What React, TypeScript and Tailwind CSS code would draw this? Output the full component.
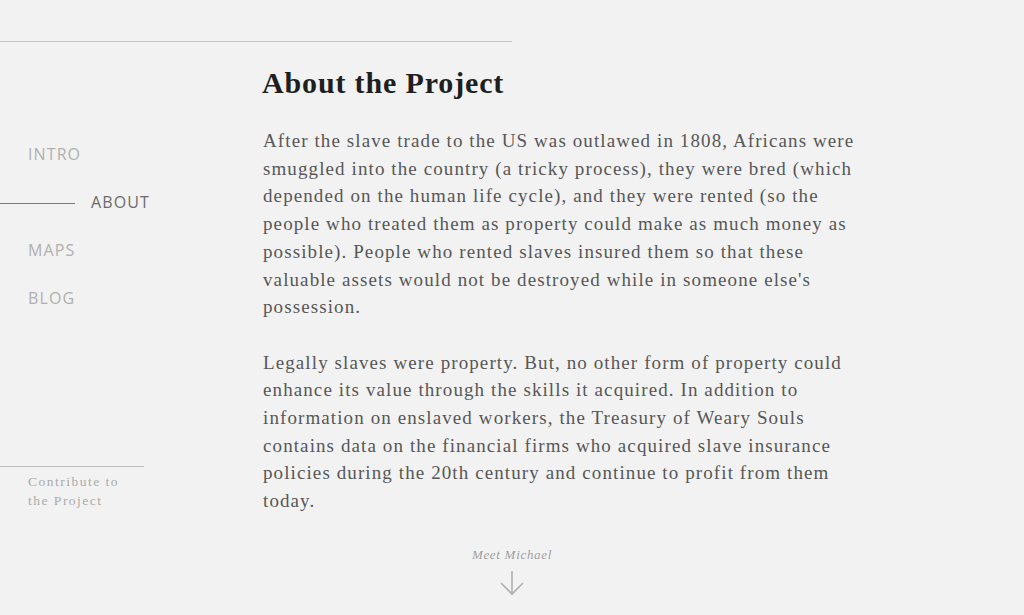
import React from "react";

const serif = { fontFamily: '"Liberation Serif", "DejaVu Serif", serif' };

export default function App() {
  return (
    <div className="relative w-[1024px] h-[615px] overflow-hidden bg-[#f2f2f2]" style={serif}>
      <div className="h-[42px] w-[512px] border-b border-[#c4c4c4]" />
      <div className="flex">
        <aside className="w-[263px] shrink-0 flex flex-col">
          <nav className="mt-[101px] flex flex-col gap-[26px] text-[16px] tracking-[1.1px] leading-[22px]" style={{ fontFamily: '"Open Sans", "Lato", sans-serif' }}>
            <a className="pl-[28px] text-[#b0b0b0]">INTRO</a>
            <a className="flex items-center text-[#6e6a6b]">
              <span className="w-[75px] h-px bg-[#7a7a7a] mr-[16px] mt-[3px]" />
              ABOUT
            </a>
            <a className="pl-[28px] text-[#b0b0b0]">MAPS</a>
            <a className="pl-[28px] text-[#b0b0b0]">BLOG</a>
          </nav>
          <div className="mt-[157px] w-[144px] border-t border-[#bdbdbd] pt-[5px] pl-[28px] text-[13.5px] leading-[19px] tracking-[1.5px] text-[#ababab]">
            Contribute to<br />the Project
          </div>
        </aside>
        <main className="w-[600px] shrink-0 pt-[21px]">
          <h1 className="-ml-px text-[30px] font-bold leading-[40px] text-[#1f1f1f] tracking-[0.85px]">About the Project</h1>
          <div className="mt-[24px] text-[19px] leading-[27.7px] tracking-[1.1px] text-[#575757]">
            <p>
              After the slave trade to the US was outlawed in 1808, Africans were smuggled into the country (a tricky process), they were bred (which depended on the human life cycle), and they were rented (so the people who treated them as property could make as much money as possible). People who rented slaves insured them so that these valuable assets would not be destroyed while in someone else's possession.
            </p>
            <p className="mt-[27.7px]">
              Legally slaves were property. But, no other form of property could enhance its value through the skills it acquired. In addition to information on enslaved workers, the Treasury of Weary Souls contains data on the financial firms who acquired slave insurance policies during the 20th century and continue to profit from them today.
            </p>
          </div>
        </main>
      </div>
      <div className="absolute left-0 right-0 top-[546px] flex flex-col items-center">
        <span className="italic text-[13px] leading-[18px] tracking-[0.7px] text-[#9e9e9e]">Meet Michael</span>
        <svg width="26" height="26" viewBox="0 0 26 26" className="mt-[6px]" fill="none" stroke="#b0b0b0" strokeWidth="1.6">
          <path d="M13 1 V24" />
          <path d="M2 13 L13 24 L24 13" />
        </svg>
      </div>
    </div>
  );
}
